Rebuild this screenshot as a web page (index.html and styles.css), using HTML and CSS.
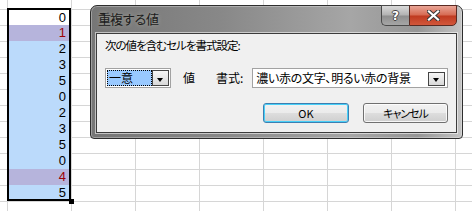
FILE: index.html
```html
<!DOCTYPE html>
<html lang="ja">
<head>
    <meta charset="UTF-8">
    <meta name="viewport" content="width=device-width, initial-scale=1.0">
    <title>重複する値</title>
    <link rel="stylesheet" href="styles.css">
</head>
<body>
    <div class="sheet">
        <div class="column">
            <div class="cell active">0</div>
            <div class="cell unique">1</div>
            <div class="cell">2</div>
            <div class="cell">3</div>
            <div class="cell">5</div>
            <div class="cell">0</div>
            <div class="cell">2</div>
            <div class="cell">3</div>
            <div class="cell">5</div>
            <div class="cell">0</div>
            <div class="cell unique">4</div>
            <div class="cell">5</div>
        </div>

        <div class="dialog">
            <div class="title-bar">
                <span class="title">重複する値</span>
                <div class="title-buttons">
                    <span class="btn-help">?</span>
                    <span class="btn-close">
                        <svg width="13" height="11" viewBox="0 0 13 11">
                            <path d="M2 1.5 L11 9.5 M11 1.5 L2 9.5" stroke="#3a3a3a" stroke-width="4.2" stroke-linecap="square"/>
                            <path d="M2 1.5 L11 9.5 M11 1.5 L2 9.5" stroke="#fff" stroke-width="2.2" stroke-linecap="square"/>
                        </svg>
                    </span>
                </div>
            </div>
            <div class="client">
                <div class="prompt">次の値を含むセルを書式設定:</div>
                <div class="form-row">
                    <div class="combo combo-type">
                        <span class="combo-text">一意</span>
                        <span class="drop"></span>
                    </div>
                    <span class="word word-value">値</span>
                    <span class="word word-format">書式:</span>
                    <div class="combo combo-format">
                        <span class="combo-text">濃い赤の文字、明るい赤の背景</span>
                        <span class="drop"></span>
                    </div>
                </div>
                <div class="button-row">
                    <button class="default">OK</button>
                    <button class="cancel">キャンセル</button>
                </div>
            </div>
        </div>
    </div>
</body>
</html>
```

FILE: styles.css
```css
body {
    margin: 0;
    background: #fff;
}
.sheet {
    position: relative;
    width: 472px;
    height: 211px;
    overflow: hidden;
    box-sizing: border-box;
    padding: 8px 0 0 7px;
    background-color: #fff;
    background-image:
        linear-gradient(to right, #d6d6d6 1px, transparent 1px),
        linear-gradient(to bottom, #d6d6d6 1px, transparent 1px);
    background-size: 64px 100%, 100% 16px;
    background-position: 7px 0, 0 9px;
}

/* selected column */
.column {
    position: relative;
    width: 64px;
    box-sizing: border-box;
    border: 2px solid #000;
    font-family: "Liberation Sans", Arial, sans-serif;
    font-size: 13px;
}
.column::after {
    content: "";
    position: absolute;
    right: -5px;
    bottom: -5px;
    width: 5px;
    height: 5px;
    background: #000;
}
.cell {
    height: 16px;
    line-height: 16px;
    padding-right: 3px;
    text-align: right;
    background: #bbdafb;
    color: #000;
}
.cell.active {
    height: 15px;
    line-height: 15px;
    background: #fff;
}
.cell:last-child {
    height: 14px;
}
.cell.unique {
    background: #b6b4dc;
    color: #9c0006;
}

/* dialog window */
.dialog {
    position: absolute;
    left: 90px;
    top: 5px;
    width: 373px;
    height: 134px;
    box-sizing: border-box;
    padding: 0 5px 5px 5px;
    display: flex;
    flex-direction: column;
    border: 1px solid #2e2e2e;
    border-radius: 7px 7px 4px 4px;
    background: linear-gradient(to right, #767676, #888888 35%, #a6a6a6 70%, #969696 88%, #c4c4c4);
    box-shadow: inset 0 0 0 1px rgba(255, 255, 255, 0.3);
    font-family: "Noto Sans CJK JP", sans-serif;
}
.title-bar {
    height: 27px;
    display: flex;
    align-items: flex-start;
}
.title {
    margin: 6px 0 0 2px;
    font-size: 13px;
    line-height: 14px;
    letter-spacing: -1px;
    color: #1c1c1c;
    text-shadow: 0 0 4px rgba(255, 255, 230, 0.35);
}
.title-buttons {
    margin: -1px 0 0 auto;
    display: flex;
    height: 21px;
}
.btn-help,
.btn-close {
    box-sizing: border-box;
    height: 21px;
    display: flex;
    align-items: center;
    justify-content: center;
}
.btn-help {
    width: 28px;
    border: 1px solid #4a4a4a;
    border-right: none;
    border-radius: 0 0 0 5px;
    background: linear-gradient(#dadada, #b2b2b2 48%, #8e8e8e 52%, #a6a6a6);
    color: #fff;
    font-family: "DejaVu Sans", sans-serif;
    font-weight: bold;
    font-size: 12px;
    text-shadow: 1px 0 0 #444, -1px 0 0 #444, 0 1px 0 #444, 0 -1px 0 #444;
}
.btn-close {
    width: 48px;
    border: 1px solid #5a2a22;
    border-radius: 0 0 5px 0;
    background: linear-gradient(#e9a596, #d66a52 48%, #bf3a20 52%, #d2573b);
}

.client {
    flex: 1;
    box-sizing: border-box;
    padding: 4px 8px 0 8px;
    border: 1px solid #3c3c3c;
    background: #f0f0f0;
    box-shadow: 0 0 0 1px rgba(255, 255, 255, 0.55);
    font-size: 12px;
    line-height: 14px;
    color: #000;
    font-feature-settings: "palt";
}
.prompt {
    font-size: 11.5px;
    letter-spacing: -1px;
}
.form-row {
    margin-top: 16px;
    display: flex;
    align-items: center;
}
.combo {
    flex-shrink: 0;
    height: 20px;
    box-sizing: border-box;
    padding: 1px;
    display: flex;
    border: 1px solid #a2a2a2;
    background: #fff;
}
.combo-type {
    width: 66px;
}
.combo-format {
    width: 196px;
    margin-left: 9px;
}
.combo-text {
    flex: 1;
    line-height: 16px;
    padding-left: 2px;
    white-space: nowrap;
    overflow: hidden;
}
.combo-format .combo-text {
    letter-spacing: -0.3px;
}
.combo-type .combo-text {
    background: #99c9ff;
    outline: 1px dotted #000;
    outline-offset: -1px;
}
.drop {
    position: relative;
    width: 17px;
    box-sizing: border-box;
    border: 1px solid #444;
    background: linear-gradient(#f6f6f6, #d8d8d8);
}
.drop::after {
    content: "";
    position: absolute;
    left: 4px;
    top: 7px;
    border-left: 3.5px solid transparent;
    border-right: 3.5px solid transparent;
    border-top: 4px solid #000;
}
.combo-format .drop {
    height: 14px;
    align-self: flex-end;
    margin-right: 1px;
}
.combo-format .drop::after {
    top: 5px;
}
.word {
    flex-shrink: 0;
    white-space: nowrap;
}
.word-value {
    margin-left: 12px;
}
.word-format {
    margin-left: 21px;
}

.button-row {
    margin-top: 15px;
    display: flex;
    justify-content: flex-end;
}
button {
    height: 20px;
    width: 85px;
    margin-left: 14px;
    padding: 0;
    border: 1px solid #707070;
    border-radius: 3px;
    background: linear-gradient(#f2f2f2, #ebebeb 48%, #dddddd 52%, #cfcfcf);
    box-shadow: inset 0 0 0 1px rgba(255, 255, 255, 0.8);
    font-family: "Noto Sans CJK JP", sans-serif;
    font-size: 11px;
    font-feature-settings: "palt";
    color: #000;
}
button.cancel {
    letter-spacing: -1px;
}
button.default {
    width: 86px;
    border-color: #3c7fb1;
    box-shadow: inset 0 0 0 1px #48d0f8;
}
```
